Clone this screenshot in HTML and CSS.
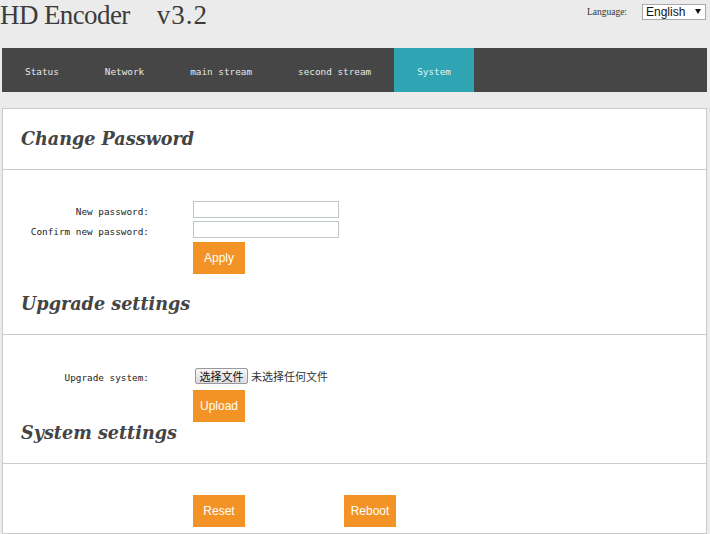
FILE: index.html
```html
<!DOCTYPE html>
<html lang="en">
  <head>
    <meta charset="UTF-8" />
    <meta name="viewport" content="width=device-width, initial-scale=1.0" />
    <title>HD Encoder v3.2 - System</title>
    <link rel="stylesheet" href="styles.css">
  </head>
  <body>
    <header class="top">
      <h1 class="brand">HD Encoder<span class="ver">v3.2</span></h1>
      <div class="lang">
        <label for="lang-select">Language:</label>
        <span class="select-wrap">
          <select id="lang-select">
            <option>English</option>
            <option>中文</option>
          </select>
          <svg class="caret" width="6" height="5" viewBox="0 0 6 5"><path d="M0 0h6L3 5z" fill="#111" /></svg>
        </span>
      </div>
    </header>

    <nav class="menu">
      <a href="#">Status</a>
      <a href="#">Network</a>
      <a href="#">main stream</a>
      <a href="#">second stream</a>
      <a href="#" class="active">System</a>
    </nav>

    <main class="panel">
      <section>
        <h2 class="sec-title">Change Password</h2>
        <div class="sec-body">
          <div class="row">
            <label for="new-pass">New password:</label>
            <input type="password" id="new-pass" />
          </div>
          <div class="row">
            <label for="confirm-pass">Confirm new password:</label>
            <input type="password" id="confirm-pass" />
          </div>
          <div class="row btn-row">
            <span class="spacer"></span>
            <button class="btn">Apply</button>
          </div>
        </div>
      </section>

      <section>
        <h2 class="sec-title">Upgrade settings</h2>
        <div class="sec-body">
          <div class="row file-row">
            <label>Upgrade system:</label>
            <span class="file-pick">
              <button class="file-btn">选择文件</button>
              <span class="file-name">未选择任何文件</span>
            </span>
          </div>
          <div class="row btn-row">
            <span class="spacer"></span>
            <button class="btn">Upload</button>
          </div>
        </div>
      </section>

      <section>
        <h2 class="sec-title tight">System settings</h2>
        <div class="sec-body last">
          <div class="row">
            <span class="spacer"></span>
            <button class="btn">Reset</button>
            <button class="btn reboot">Reboot</button>
          </div>
        </div>
      </section>
    </main>
  </body>
</html>
```

FILE: styles.css
```css
body {
  margin: 0;
  background-color: #ebebeb;
  color: #222;
  font-family: "DejaVu Sans Mono", monospace;
}

/* header: title + language picker */
.top {
  height: 48px;
  display: flex;
  justify-content: space-between;
  align-items: flex-start;
}

.brand {
  margin: 0;
  font-family: "Liberation Serif", serif;
  font-weight: normal;
  font-size: 27px;
  line-height: 30px;
  letter-spacing: -0.6px;
  color: #3c3c3c;
}

.brand .ver {
  margin-left: 27px;
  letter-spacing: 1px;
}

.lang {
  display: flex;
  align-items: center;
  padding-top: 4px;
  margin-right: 4px;
}

.lang label {
  font-family: "Liberation Serif", serif;
  font-size: 9.5px;
  color: #333;
  margin-right: 15px;
}

.select-wrap {
  position: relative;
  display: block;
}

.select-wrap select {
  appearance: none;
  display: block;
  width: 64px;
  height: 16px;
  margin: 0;
  padding: 0 0 0 3px;
  border: 1px solid #a9a9a9;
  border-radius: 0;
  background: #fff;
  font-family: "Liberation Sans", sans-serif;
  font-size: 12px;
  color: #111;
}

.select-wrap .caret {
  position: absolute;
  right: 5px;
  top: 5px;
  pointer-events: none;
}

/* main nav bar */
.menu {
  display: flex;
  height: 44px;
  margin: 0 3px 0 2px;
  background-color: #464646;
}

.menu a {
  display: block;
  padding: 3px 23px 0;
  line-height: 41px;
  font-size: 9.35px;
  color: #e8e8e8;
  text-decoration: none;
}

.menu a.active {
  background-color: #2fa4b3;
  color: #dff7fa;
}

/* settings panel */
.panel {
  margin: 16px 3px 0 2px;
  background: #fff;
  border: 1px solid #cacaca;
}

.sec-title {
  margin: 0;
  padding: 19px 18px 19px;
  line-height: 22px;
  font-family: "DejaVu Serif", serif;
  font-style: italic;
  font-weight: bold;
  font-size: 17.6px;
  color: #444;
  border-bottom: 1px solid #cccccc;
}

.sec-title.tight {
  padding-top: 0;
}

.sec-body {
  padding-top: 31px;
  display: flex;
  flex-direction: column;
  gap: 3px;
}

.sec-body.last {
  padding-bottom: 6px;
}

.row {
  display: flex;
  align-items: center;
}

.row label,
.row .spacer {
  width: 146px;
  margin-right: 44px;
  padding-top: 3px;
  text-align: right;
  font-size: 9.35px;
  color: #222;
}

.row input {
  box-sizing: border-box;
  width: 146px;
  height: 17px;
  margin: 0;
  border: 1px solid #bfc8c8;
  background: #fff;
}

.btn-row {
  margin-top: 1px;
}

.file-row {
  padding: 2px 0;
}

.file-pick {
  display: flex;
  align-items: center;
  font-family: "Noto Sans CJK SC", sans-serif;
  font-size: 11px;
}

.file-btn {
  box-sizing: border-box;
  height: 16px;
  width: 53px;
  margin: 0 3px 0 2px;
  padding: 0;
  border: 1px solid #9a9a9a;
  border-radius: 2px;
  background: linear-gradient(#f7f7f7, #dcdcdc);
  font-family: inherit;
  font-size: 11px;
  line-height: 14px;
  color: #111;
}

.file-name {
  color: #333;
}

.btn {
  width: 52px;
  height: 32px;
  padding: 0;
  border: none;
  background-color: #f39325;
  color: #fff;
  font-family: "Liberation Sans", sans-serif;
  font-size: 12px;
  cursor: pointer;
}

.btn:hover {
  background-color: #e07f12;
}

.btn.reboot {
  margin-left: 99px;
}
```
